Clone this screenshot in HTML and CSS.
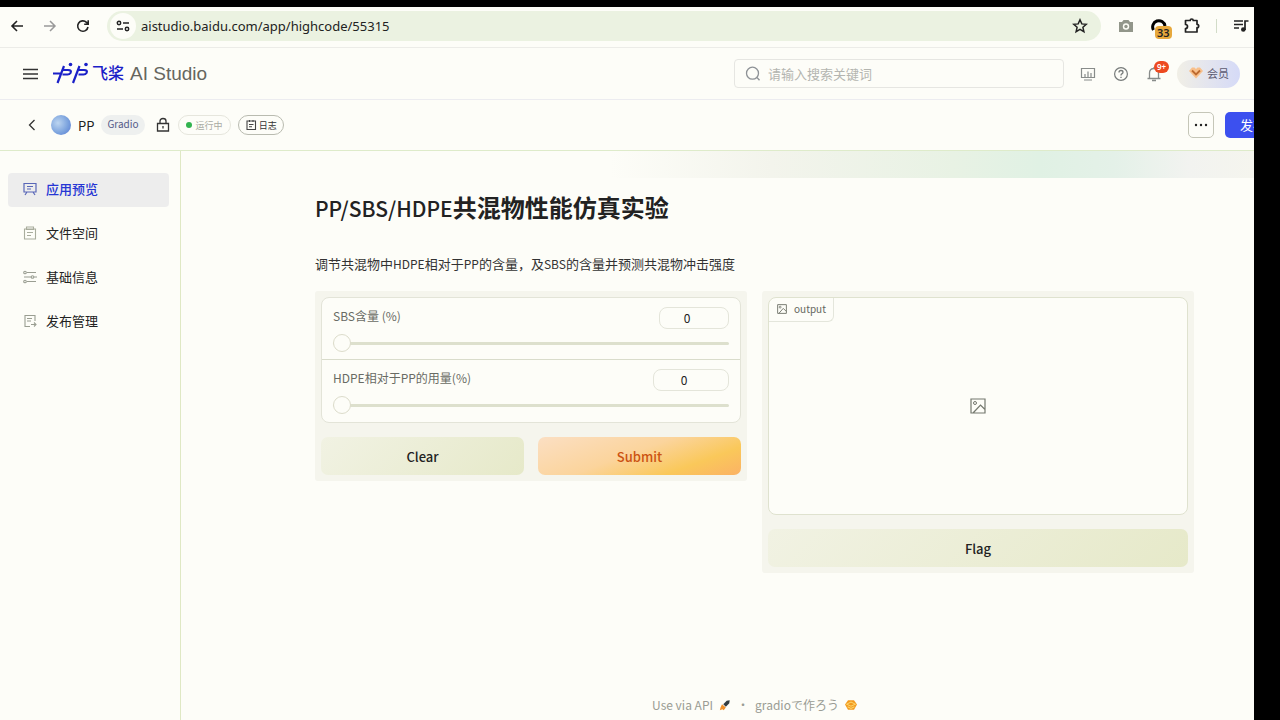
FILE: index.html
```html
<!DOCTYPE html>
<html lang="zh-CN">
<head>
<meta charset="utf-8">
<title>PP - 飞桨 AI Studio</title>
<link rel="stylesheet" href="styles.css">
</head>
<body>
<div class="app">
  <div class="browser-bar">
    <div class="nav-buttons">
      <button class="icon-btn" aria-label="Back"><svg class="ico16" viewBox="0 0 16 16"><path d="M14 8H3M8 3 3 8l5 5" stroke="#222" stroke-width="1.600"/></svg></button>
      <button class="icon-btn" aria-label="Forward"><svg class="ico16" viewBox="0 0 16 16"><path d="M2 8h11M8 3l5 5-5 5" stroke="#999" stroke-width="1.500"/></svg></button>
      <button class="icon-btn" aria-label="Reload"><svg class="ico16" viewBox="0 0 16 16"><path d="M13 9a5.200 5.200 0 1 1-1.500-4.700L13 6M13.200 2.200v4h-4" stroke="#222" stroke-width="1.600"/></svg></button>
    </div>
    <div class="address">
      <span class="site-info"><svg class="ico16" viewBox="0 0 16 16"><g stroke="#222" stroke-width="1.500"><circle cx="4" cy="5" r="1.700"/><path d="M8 5h6M2 11h6"/><circle cx="12" cy="11" r="1.700"/></g></svg></span>
      <input class="url" aria-label="Address" value="aistudio.baidu.com/app/highcode/55315">
      <button class="icon-btn" aria-label="Bookmark"><svg class="ico16" viewBox="0 0 16 16"><path d="m8 1.800 1.800 4.100 4.500.4-3.400 3 1 4.400L8 11.400l-3.900 2.300 1-4.400-3.400-3 4.500-.4z" stroke="#222" stroke-width="1.500"/></svg></button>
    </div>
    <div class="extensions">
      <button class="icon-btn" aria-label="Camera"><svg class="ico16" viewBox="0 0 16 16"><path d="M1 4h3l1.500-2h5L12 4h3v10H1z" fill="#92968a"/><circle cx="8" cy="8.500" r="3.200" fill="#fcfcf4"/><circle cx="8" cy="8.500" r="1.700" fill="#92968a"/></svg></button>
      <button class="icon-btn ext-badge" aria-label="Extension"><svg class="ico16" viewBox="0 0 16 16"><path d="M2.500 12A6.200 6.200 0 1 1 14 8" stroke="#000" stroke-width="3"/></svg><span class="badge-count">33</span></button>
      <button class="icon-btn" aria-label="Extensions"><svg class="ico16" viewBox="0 0 16 16"><path d="M1.500 2.500h4.700a1.500 1.500 0 0 1 3 0h3.800v3.800a1.700 1.700 0 0 1 0 3.400v4.300H1.500v-3.500a2 2 0 0 0 0-4z" stroke="#222" stroke-width="1.700" stroke-linejoin="round"/></svg></button>
      <span class="divider"></span>
      <button class="icon-btn" aria-label="Media"><svg class="ico16" viewBox="0 0 16 16"><path d="M1 3h9M1 6.500h9M1 10h5M12 12V3h3.500" stroke="#222" stroke-width="1.700"/><circle cx="10.300" cy="11.500" r="2.300" fill="#222"/></svg></button>
    </div>
  </div>

  <header class="site-header">
    <button class="icon-btn" aria-label="菜单"><svg class="ico16" viewBox="0 0 16 16"><path d="M1 3.500h15M1 8h15M1 12.500h15" stroke="#333" stroke-width="1.600"/></svg></button>
    <a class="logo" href="#">
      <svg class="logo-mark" viewBox="0 0 38 24"><g stroke="#1a20c8" stroke-width="2.200"><path d="M1 11.500h9M12 4 5.500 21M11 8h5q4 0 2.500 3-1 1.500-3 1.500h-5M27.500 4 21 21M26 8h6q4 0 2.500 3-1 1.500-3 1.500h-5"/></g><circle cx="18.500" cy="2.500" r="1.800" fill="#1a20c8"/><circle cx="34" cy="2.500" r="1.800" fill="#1a20c8"/></svg>
      <span class="logo-cn">飞桨</span><span class="logo-en">AI Studio</span>
    </a>
    <label class="search"><svg class="ico16" viewBox="0 0 16 16"><circle cx="7.500" cy="7.200" r="6" stroke="#8e9296" stroke-width="1.300"/><path d="m12 11.500 2.500 2.700" stroke="#8e9296" stroke-width="1.300"/></svg><input aria-label="搜索" placeholder="请输入搜索关键词"></label>
    <div class="header-tools">
      <button class="icon-btn" aria-label="数据"><svg class="ico16" viewBox="0 0 16 16"><path d="M1.500 2.500h13v9h-13zM5 8v3M8 5.500V11M11 7v4M4 14h8" stroke="#888c8a" stroke-width="1.200"/></svg></button>
      <button class="icon-btn" aria-label="帮助"><svg class="ico16" viewBox="0 0 16 16"><circle cx="8" cy="8" r="6.400" stroke="#777b7a" stroke-width="1.200"/><path d="M6 6.500q0-2 2-2t2 1.700q0 1-1.200 1.700Q8 8.300 8 9.500M8 10.700V12" stroke="#777b7a" stroke-width="1.300"/></svg></button>
      <button class="icon-btn notify" aria-label="通知"><svg class="ico16" viewBox="0 0 16 16"><path d="M1.500 12.500h13M3.500 12V7q0-4.500 4.500-4.500T12.500 7v5M6 14.500h4M8 1v1.500" stroke="#888c8a" stroke-width="1.300"/></svg><span class="notify-count">9+</span></button>
      <a class="vip" href="#"><svg class="ico16" viewBox="0 0 16 16"><path d="M4 2.500h2.500L8 4l1.500-1.500H12L15 6l-7 7.500L1 6z" fill="#f8c08c"/><path d="m4 5.500 4 4 4-4" stroke="#bd6a30" stroke-width="1.800"/></svg>会员</a>
    </div>
  </header>

  <div class="project-bar">
    <button class="icon-btn" aria-label="返回"><svg class="ico16" viewBox="0 0 16 16"><path d="M10.500 3 5.500 8l5 5" stroke="#333" stroke-width="1.300"/></svg></button>
    <span class="avatar"></span>
    <span class="project-name">PP</span>
    <span class="tag">Gradio</span>
    <svg class="ico16 lock" viewBox="0 0 16 16"><path d="M2.500 6.500h11v7.500h-11zM5 6.500V4q0-2.500 3-2.500T11 4v2.500M8 9v2.500" stroke="#333" stroke-width="1.300"/></svg>
    <span class="status"><i class="dot"></i>运行中</span>
    <button class="log"><svg class="ico12" viewBox="0 0 12 12"><path d="M2 2h8.500v8.500H2zM4.500 1v2M8 1v2M4 5.500h4.500M4 7.800h3" stroke="#444" stroke-width="1.100"/></svg>日志</button>
    <button class="more" aria-label="更多"><svg class="ico16" viewBox="0 0 16 16"><g fill="#222"><circle cx="3" cy="8" r="1.200"/><circle cx="8" cy="8" r="1.200"/><circle cx="13" cy="8" r="1.200"/></g></svg></button>
    <button class="publish">发布</button>
  </div>

  <div class="body">
    <nav class="sidebar">
      <a class="side-item active" href="#"><svg class="ico14" viewBox="0 0 14 14"><path d="M1 1.500h12v8.500H1zM4 4.500h6M4 7h4M4 10l-2 3M10 10l2 3" stroke="#5967b8" stroke-width="1.200"/></svg>应用预览</a>
      <a class="side-item" href="#"><svg class="ico14" viewBox="0 0 14 14"><path d="M1.500 3h11v10h-11zM3.500 1v2.500h7V1zM4 6.500h6M4 9.500h4" stroke="#a9ad9d" stroke-width="1.100"/></svg>文件空间</a>
      <a class="side-item" href="#"><svg class="ico14" viewBox="0 0 14 14"><g stroke="#9a9e92" stroke-width="1.100"><circle cx="2" cy="2.500" r="1.300"/><path d="M4 2.500h9M1 7h7M11 7h3M4 11.500h9"/><circle cx="9.500" cy="7" r="1.300"/><circle cx="2" cy="11.500" r="1.300"/></g></svg>基础信息</a>
      <a class="side-item" href="#"><svg class="ico14" viewBox="0 0 14 14"><path d="M12 7V1.500H2v11h5M4 4.500h5M4 7h4M8 10.500h5M11 8.500l2 2-2 2" stroke="#9a9e92" stroke-width="1.100"/></svg>发布管理</a>
    </nav>

    <main class="main">
      <div class="gradio">
        <h1 class="title"><span class="latin">PP/SBS/HDPE</span>共混物性能仿真实验</h1>
        <p class="desc">调节共混物中<span class="latin">HDPE</span>相对于<span class="latin">PP</span>的含量，及<span class="latin">SBS</span>的含量并预测共混物冲击强度</p>
        <div class="columns">
          <section class="panel">
            <div class="form">
              <div class="field">
                <div class="field-head"><label for="sbs">SBS含量 (%)</label><input class="num" value="0" aria-label="SBS含量数值"></div>
                <input class="slider" id="sbs" type="range" min="0" max="100" value="0">
              </div>
              <div class="field">
                <div class="field-head"><label for="hdpe">HDPE相对于PP的用量(%)</label><input class="num wide" value="0" aria-label="HDPE用量数值"></div>
                <input class="slider" id="hdpe" type="range" min="0" max="100" value="0">
              </div>
            </div>
            <div class="actions"><button class="btn">Clear</button><button class="btn primary">Submit</button></div>
          </section>
          <section class="panel">
            <div class="output">
              <span class="output-label"><svg class="ico10" viewBox="0 0 16 16"><path d="M1 1h14v14H1zM3 15l7-8 5 5" stroke="#74786e" stroke-width="1.500"/><circle cx="5" cy="5" r="1.500" stroke="#74786e" stroke-width="1.300"/></svg>output</span>
              <svg class="ico16 empty" viewBox="0 0 16 16"><path d="M1 1h14v14H1zM3 15l7.500-8 4.500 4.500" stroke="#74786e" stroke-width="1.200"/><circle cx="5" cy="5" r="1.500" stroke="#74786e"/></svg>
            </div>
            <div class="actions"><button class="btn">Flag</button></div>
          </section>
        </div>
        <footer class="footer">
          <a href="#">Use via API <svg class="ico12" viewBox="0 0 14 14"><path d="m5 6 4-4 3.500-.5L12 5 8 9z" fill="#333d42"/><path d="m3.500 6 4.500 4-2.500 3-1.500-1-3 1 .8-3z" fill="#ef902b"/></svg></a>
          <span>·</span>
          <a href="#">gradioで作ろう <svg class="ico12" viewBox="0 0 14 14"><path d="M3.500 1.500h7L14 6.500l-3.500 6h-7L0 6.500z" fill="#f39a1e"/><path d="m2 6 5-2.500L12 6 7 8.500zM3 9l4 2 4-2" stroke="#fbd46c" stroke-width="1.200"/></svg></a>
        </footer>
      </div>
    </main>
  </div>
</div>
</body>
</html>
```

FILE: styles.css
```css
* { box-sizing: border-box; }

body {
  margin: 0;
  padding: 7px 26px 0 0;
  min-height: 100vh;
  display: flex;
  background: #000;
  color: #222;
  font-family: "Noto Sans CJK SC", "Noto Sans", sans-serif;
  font-size: 13px;
}

button, input { font: inherit; color: inherit; margin: 0; }
button { padding: 0; border: 0; background: none; cursor: pointer; }
input { border: 0; background: none; outline: 0; min-width: 0; }
a { color: inherit; text-decoration: none; }
svg { fill: none; flex: none; }

.ico16 { width: 16px; height: 16px; }
.ico14 { width: 14px; height: 14px; }
.ico12 { width: 12px; height: 12px; }
.ico10 { width: 10px; height: 10px; }
.icon-btn { display: flex; position: relative; flex: none; }

.app {
  flex: 1;
  min-width: 0;
  display: flex;
  flex-direction: column;
  overflow: hidden;
  background: #fdfdf8;
}

/* Browser toolbar */
.browser-bar {
  display: flex;
  align-items: center;
  height: 41px;
  padding: 0 5px 2px 9px;
  border-bottom: 1px solid #ecece8;
}
.nav-buttons { display: flex; gap: 17px; margin-right: 16px; }
.address {
  flex: 1;
  display: flex;
  align-items: center;
  height: 30px;
  padding: 0 13px 0 3px;
  border-radius: 15px;
  background: #ebf2e1;
}
.site-info {
  display: flex;
  align-items: center;
  justify-content: center;
  width: 26px;
  height: 26px;
  border-radius: 13px;
  background: #fdfdf8;
}
.url { flex: 1; padding: 0 0 0 5px; font-family: "Noto Sans", sans-serif; }
.extensions { display: flex; align-items: center; gap: 17px; margin-left: 17px; }
.divider { width: 1px; height: 14px; background: #d2dcc8; }
.extensions .divider { margin: 0 -1px; }
.badge-count {
  position: absolute;
  left: 4px;
  top: 8px;
  padding: 0 2px;
  border-radius: 4px;
  background: #e7a83c;
  font: 600 11px/13px "Noto Sans", sans-serif;
}

/* Site header */
.site-header {
  display: flex;
  align-items: center;
  height: 52px;
  padding: 0 14px 0 22px;
  border-bottom: 1px solid #ececf0;
}
.logo { display: flex; align-items: center; margin-left: 14px; }
.logo-mark { width: 38px; height: 24px; }
.logo-cn { margin-left: 2px; color: #1a20c8; font-size: 16px; line-height: 24px; padding-bottom: 3px; font-weight: 500; }
.logo-en { margin-left: 6px; color: #66665e; font: 19px "Liberation Sans", sans-serif; }
.search {
  display: flex;
  align-items: center;
  gap: 7px;
  width: 330px;
  height: 29px;
  margin-left: auto;
  padding: 0 10px;
  border: 1px solid #e6e6e2;
  border-radius: 4px;
}
.search input { flex: 1; padding: 0; }
.search input::placeholder { color: #b4b5b0; opacity: 1; }
.header-tools { display: flex; align-items: center; gap: 17px; margin-left: 16px; }
.notify-count {
  position: absolute;
  left: 8px;
  top: -5px;
  padding: 0 3px;
  border-radius: 6px;
  background: #ed4a20;
  color: #fff;
  font: 600 8px/12px "Noto Sans", sans-serif;
}
.vip {
  display: flex;
  align-items: center;
  gap: 3px;
  height: 28px;
  margin-left: -2px;
  padding: 0 11px 2px;
  border-radius: 14px;
  background: linear-gradient(90deg, #f1efe6, #d5daf7);
  color: #5b5970;
  font-size: 11px;
}

/* Project bar */
.project-bar {
  display: flex;
  align-items: center;
  height: 51px;
  padding-left: 24px;
  border-bottom: 1px solid #deebca;
  white-space: nowrap;
}
.project-bar > * { flex: none; }
.avatar {
  width: 20px;
  height: 20px;
  margin-left: 11px;
  border-radius: 50%;
  background: radial-gradient(circle at 35% 40%, #bcd5f0, #7da4de 55%, #5277d2);
}
.project-name { margin-left: 7px; }
.tag {
  margin: 0 10px 0 7px;
  padding: 0 6px 2px;
  border-radius: 10px;
  background: #eef0ef;
  color: #555a88;
  font-size: 10px;
  line-height: 18px;
}
.status, .log {
  display: flex;
  align-items: center;
  height: 20px;
  margin-left: 7px;
  padding: 0 7px;
  border: 1px solid #e6e6dd;
  border-radius: 10px;
  color: #aaaca4;
  font-size: 9px;
}
.status { gap: 4px; }
.dot { width: 6px; height: 6px; border-radius: 50%; background: #32b34f; }
.log { gap: 2px; padding: 0 6px; border-color: #b9bbb0; color: #333; }
.more {
  display: flex;
  align-items: center;
  justify-content: center;
  width: 26px;
  height: 26px;
  margin-left: auto;
  border: 1px solid #c5c6b8;
  border-radius: 5px;
}
.publish {
  height: 26px;
  margin: 0 -27px 0 11px;
  padding: 0 15px 2px;
  border-radius: 5px 0 0 5px;
  background: #3c50ef;
  color: #fff;
}

/* Body */
.body { flex: 1; display: flex; }
.sidebar {
  flex: none;
  display: flex;
  flex-direction: column;
  gap: 10px;
  width: 181px;
  padding: 22px 11px 22px 8px;
  border-right: 1px solid #dfe8c4;
}
.side-item {
  display: flex;
  align-items: center;
  gap: 9px;
  height: 34px;
  padding: 0 0 3px 15px;
  border-radius: 4px;
}
.side-item.active { background: #ededed; color: #2636d4; font-weight: 500; }

.main {
  flex: 1;
  min-width: 0;
  display: flex;
  padding: 40px 60px 5px 134px;
  background: linear-gradient(90deg, transparent 40%, #f3f4ec 55%, #e8f2e4 72%, #e0f1e4 80%, #e4f1e8 87%, #f2f3f0 94%, #f5f5ee) top / 100% 27px no-repeat;
}
.gradio { flex: 1; min-width: 0; display: flex; flex-direction: column; }
.title { margin: 0; font-size: 24px; line-height: 32px; font-weight: 700; }
.title .latin { font-size: 21px; font-weight: 500; }
.desc { margin: 30px 0 17px; line-height: 20px; color: #333; }
.desc .latin { font-size: 12px; }
.columns {
  display: grid;
  grid-template-columns: 1fr 1fr;
  gap: 15px;
  align-items: start;
}
.panel {
  display: flex;
  flex-direction: column;
  gap: 14px;
  padding: 6px;
  border-radius: 3px;
  background: #f5f5ed;
}
.form { padding-bottom: 1px; border: 1px solid #e3e4d8; border-radius: 8px; background: #fdfdf8; }
.field { padding: 9px 11px 7px; }
.field + .field { border-top: 1px solid #d9dccb; }
.field-head {
  display: flex;
  align-items: flex-start;
  justify-content: space-between;
  font-size: 12px;
  line-height: 18px;
  color: #696b64;
}
.num {
  width: 70px;
  height: 22px;
  padding: 0 14px 2px 0;
  border: 1px solid #e4e5da;
  border-radius: 8px;
  color: #222;
  text-align: center;
}
.num.wide { width: 76px; }
.slider {
  appearance: none;
  display: block;
  width: 100%;
  height: 18px;
  margin-top: 5px;
}
.slider::-webkit-slider-runnable-track {
  height: 3px;
  border-radius: 2px;
  background: #dde0cd;
}
.slider::-webkit-slider-thumb {
  appearance: none;
  width: 18px;
  height: 18px;
  margin-top: -8px;
  border: 1px solid #dcdccb;
  border-radius: 50%;
  background: #fdfdf8;
}
.actions { display: flex; gap: 14px; }
.btn {
  flex: 1;
  height: 38px;
  border-radius: 7px;
  background: linear-gradient(135deg, #f1f2e3, #e6e9c9);
  font-size: 13px;
  font-weight: 500;
}
.btn.primary {
  background: linear-gradient(160deg, #fbdfc3, #fbd49c 45%, #fac85a 75%, #fbb265);
  color: #cc5312;
}
.output {
  position: relative;
  display: flex;
  align-items: center;
  justify-content: center;
  height: 218px;
  border: 1px solid #dfe2cf;
  border-radius: 8px;
  background: #fdfdf8;
}
.output-label {
  position: absolute;
  left: 0;
  top: 0;
  display: flex;
  align-items: center;
  gap: 7px;
  height: 24px;
  padding: 0 7px 2px 8px;
  border: solid #e4e6dc;
  border-width: 0 1px 1px 0;
  border-radius: 0 0 6px;
  color: #666860;
  font-size: 10px;
}
.footer {
  display: flex;
  justify-content: center;
  gap: 6px;
  margin-top: auto;
  color: #9a9c94;
  font-size: 12px;
  line-height: 20px;
}
.footer a { display: flex; align-items: center; gap: 6px; }
```
